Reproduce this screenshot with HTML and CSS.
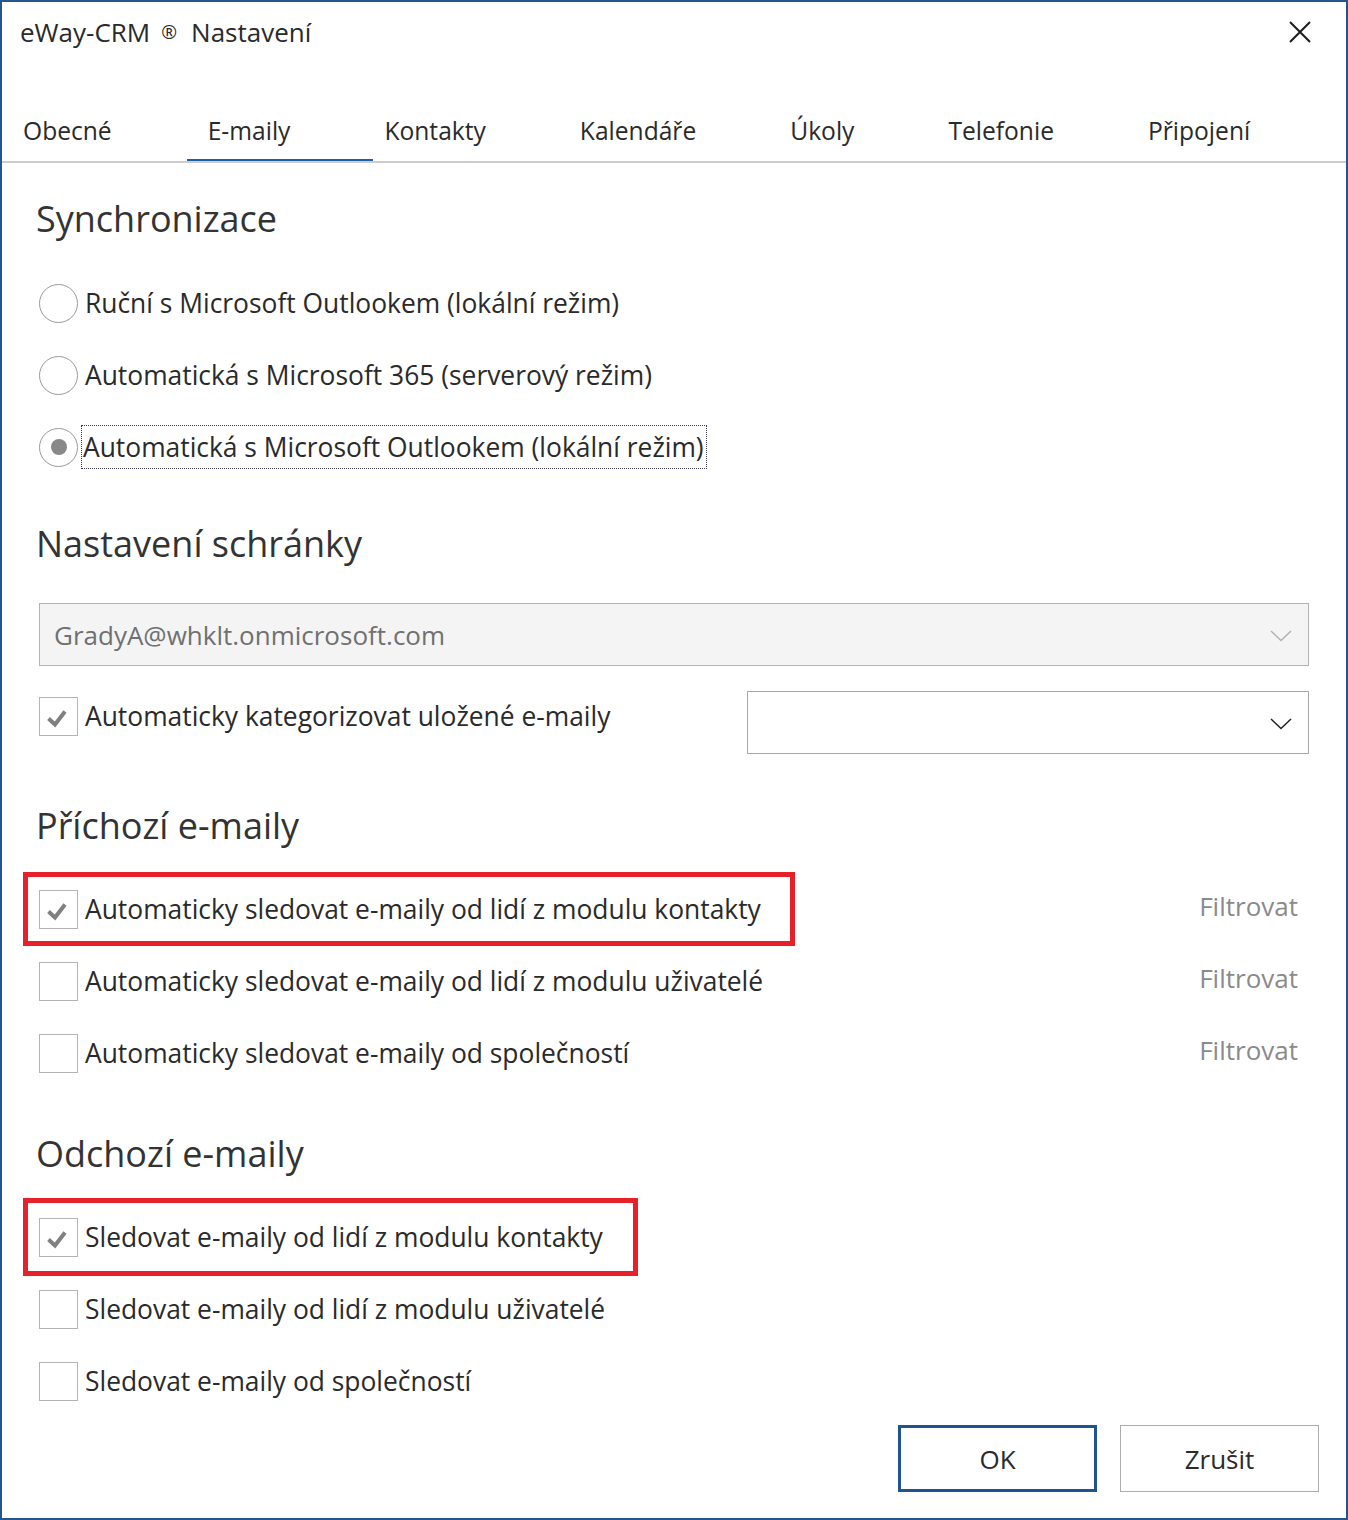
FILE: index.html
```html
<!DOCTYPE html>
<html lang="cs">
<head>
<meta charset="utf-8">
<title>eWay-CRM Nastavení</title>
<link rel="stylesheet" href="styles.css">
</head>
<body>
<div class="window">
  <div class="titlebar">
    <span class="title">eWay-CRM<span class="reg">®</span>Nastavení</span>
    <svg class="close" width="22" height="22" viewBox="0 0 22 22"><path d="M1 1 L21 21 M21 1 L1 21" stroke="#1a1a1a" stroke-width="2" fill="none"/></svg>
  </div>
  <div class="tabs">
    <span class="tab first">Obecné</span>
    <span class="tab active">E-maily</span>
    <span class="tab">Kontakty</span>
    <span class="tab">Kalendáře</span>
    <span class="tab">Úkoly</span>
    <span class="tab">Telefonie</span>
    <span class="tab">Připojení</span>
  </div>
  <div class="content">
    <h2 class="heading h-sync">Synchronizace</h2>
    <div class="row"><span class="radio"></span><span class="label">Ruční s Microsoft Outlookem (lokální režim)</span></div>
    <div class="row"><span class="radio"></span><span class="label">Automatická s Microsoft 365 (serverový režim)</span></div>
    <div class="row"><span class="radio checked"></span><span class="label focus">Automatická s Microsoft Outlookem (lokální režim)</span></div>

    <h2 class="heading h-box">Nastavení schránky</h2>
    <div class="combo disabled">
      <span class="combo-text">GradyA@whklt.onmicrosoft.com</span>
      <svg class="chev" width="22" height="12" viewBox="0 0 22 12"><path d="M1 1 L11 10.5 L21 1" stroke="#b0b0b0" stroke-width="1.4" fill="none"/></svg>
    </div>
    <div class="cat-row">
      <div class="check-group cat">
        <span class="checkbox"><svg width="38" height="38" viewBox="0 0 38 38"><path d="M9.5 21.5 L16 27.5 L26 14.5" stroke="#808080" stroke-width="4" fill="none"/></svg></span>
        <span class="label">Automaticky kategorizovat uložené e-maily</span>
      </div>
      <div class="combo empty">
        <svg class="chev" width="22" height="12" viewBox="0 0 22 12"><path d="M1 1 L11 10.5 L21 1" stroke="#222" stroke-width="1.5" fill="none"/></svg>
      </div>
    </div>

    <h2 class="heading h-in">Příchozí e-maily</h2>
    <div class="row filter-row">
      <div class="check-group hl hl-in">
        <span class="checkbox"><svg width="38" height="38" viewBox="0 0 38 38"><path d="M9.5 21.5 L16 27.5 L26 14.5" stroke="#808080" stroke-width="4" fill="none"/></svg></span>
        <span class="label">Automaticky sledovat e-maily od lidí z modulu kontakty</span>
      </div>
      <span class="filter">Filtrovat</span>
    </div>
    <div class="row filter-row">
      <div class="check-group">
        <span class="checkbox"></span>
        <span class="label">Automaticky sledovat e-maily od lidí z modulu uživatelé</span>
      </div>
      <span class="filter">Filtrovat</span>
    </div>
    <div class="row filter-row">
      <div class="check-group">
        <span class="checkbox"></span>
        <span class="label">Automaticky sledovat e-maily od společností</span>
      </div>
      <span class="filter">Filtrovat</span>
    </div>

    <h2 class="heading h-out">Odchozí e-maily</h2>
    <div class="row">
      <div class="check-group hl hl-out">
        <span class="checkbox"><svg width="38" height="38" viewBox="0 0 38 38"><path d="M9.5 21.5 L16 27.5 L26 14.5" stroke="#808080" stroke-width="4" fill="none"/></svg></span>
        <span class="label">Sledovat e-maily od lidí z modulu kontakty</span>
      </div>
    </div>
    <div class="row">
      <div class="check-group">
        <span class="checkbox"></span>
        <span class="label">Sledovat e-maily od lidí z modulu uživatelé</span>
      </div>
    </div>
    <div class="row">
      <div class="check-group">
        <span class="checkbox"></span>
        <span class="label">Sledovat e-maily od společností</span>
      </div>
    </div>
  </div>
  <div class="buttons">
    <button class="btn ok">OK</button>
    <button class="btn">Zrušit</button>
  </div>
</div>
</body>
</html>
```

FILE: styles.css
```css
* { box-sizing: border-box; }
html, body { margin: 0; padding: 0; background: #fff; }
body {
  font-family: "Open Sans", "Noto Sans", sans-serif;
  color: #2a2a2a;
}
.window {
  width: 1348px;
  height: 1520px;
  border: 2px solid #24558f;
  background: #fff;
  display: flex;
  flex-direction: column;
}
.titlebar {
  height: 64px;
  display: flex;
  align-items: center;
  justify-content: space-between;
  padding: 0 35px 4px 18px;
}
.title {
  font-size: 26px;
  color: #2a2a2a;
  white-space: nowrap;
}
.title .reg { font-size: 19px; margin: 0 14px 0 11px; vertical-align: 3px; }
.tabs {
  height: 97px;
  display: flex;
  align-items: flex-end;
  border-bottom: 2px solid #cdcdcd;
  overflow: hidden;
}
.tab {
  font-size: 24.6px;
  line-height: 36px;
  padding-bottom: 12px;
  margin-right: 94px;
  position: relative;
  color: #2a2a2a;
  white-space: nowrap;
  flex: none;
}
.tab.first { margin-left: 21px; margin-right: 96px; }
.tab.active::after {
  content: "";
  position: absolute;
  left: -21px;
  width: 186px;
  bottom: -2px;
  height: 4px;
  background: #1f5fa8;
}
.content { padding-left: 36px; padding-right: 37px; }
.heading {
  font-weight: 400;
  font-size: 36px;
  line-height: 44px;
  margin: 0 0 0 -2px;
  color: #333;
}
.h-sync { margin-top: 34px; margin-bottom: 26px; }
.h-box { margin-top: 39px; margin-bottom: 37px; }
.h-in { margin-top: 50px; margin-bottom: 25px; }
.h-out { margin-top: 43px; margin-bottom: 25px; }
.row {
  height: 72px;
  display: flex;
  align-items: center;
}
.label {
  font-size: 26.4px;
  line-height: 40px;
  color: #2a2a2a;
  margin-left: 7px;
  white-space: nowrap;
}
.radio {
  width: 39px;
  height: 39px;
  border-radius: 50%;
  border: 1.5px solid #9a9a9a;
  display: flex;
  align-items: center;
  justify-content: center;
  flex: none;
  margin-left: 1px;
}
.radio.checked::after {
  content: "";
  width: 16px;
  height: 16px;
  border-radius: 50%;
  background: #888;
}
.label.focus {
  outline: 1px dotted #3a3050;
  outline-offset: 0;
  margin-left: 4px;
  padding: 0 2px 0 1px;
  line-height: 42px;
}
.combo {
  height: 63px;
  border: 1px solid #b3b3b3;
  display: flex;
  align-items: center;
  justify-content: space-between;
  padding: 0 16px 0 14px;
}
.combo.disabled { background: #f4f4f4; margin-left: 1px; }
.combo-text { font-size: 26px; color: #707070; }
.combo.empty {
  width: 562px;
  background: #fff;
  justify-content: flex-end;
  border-color: #a8a8a8;
}
.chev { margin-top: 2px; }
.cat-row {
  margin-top: 25px;
  display: flex;
  justify-content: space-between;
  align-items: flex-start;
}
.check-group {
  display: flex;
  align-items: center;
  position: relative;
  margin-left: 1px;
}
.check-group.cat { margin-top: 5px; }
.checkbox {
  width: 39px;
  height: 39px;
  border: 1px solid #b4b4b4;
  flex: none;
  display: block;
}
.checkbox svg { display: block; margin: -1px; }
.hl::before {
  content: "";
  position: absolute;
  left: -16px;
  border: 5px solid #e8202a;
}
.hl-in::before { top: -17px; bottom: -17px; right: -34px; }
.hl-out::before { top: -19px; bottom: -19px; right: -35px; }
.filter-row { justify-content: space-between; }
.filter {
  font-size: 26px;
  color: #8a8a8a;
  margin-right: 11px;
  margin-top: -6px;
}
.buttons {
  margin-top: 8px;
  display: flex;
  justify-content: flex-end;
  gap: 23px;
  padding-right: 27px;
}
.btn {
  width: 199px;
  height: 67px;
  background: #fff;
  border: 1px solid #adadad;
  font-family: "Open Sans", "Noto Sans", sans-serif;
  font-size: 26px;
  color: #2a2a2a;
  padding: 0;
}
.btn.ok { border: 3px solid #1e5591; }
```
